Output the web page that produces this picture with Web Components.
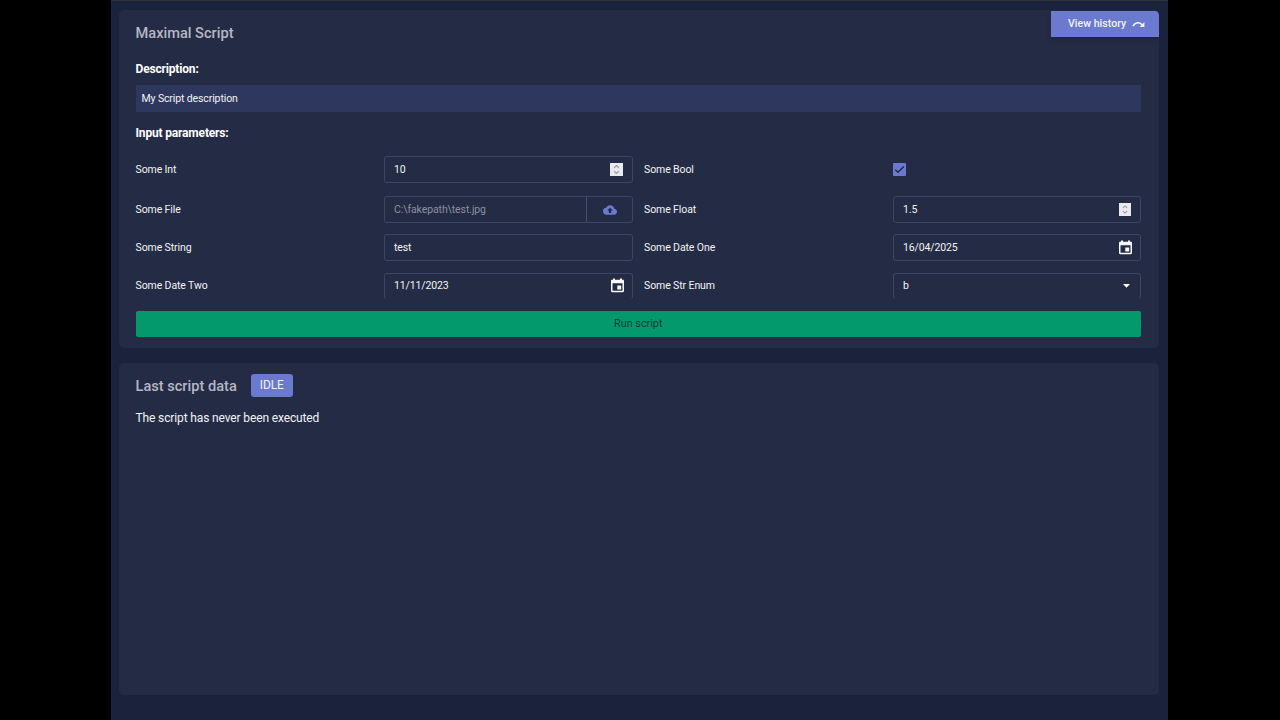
<!DOCTYPE html>
<html lang="en">
<head>
<meta charset="utf-8">
<title>Maximal Script</title>
<style>
html,body{margin:0;height:100%;background:#000;overflow:hidden}
body{font-family:Roboto,sans-serif;color:#f2f3f7;font-size:10.5px}
</style>
</head>
<body>
<script-page></script-page>
<script>
function define(name, html) {
  const template = document.createElement('template');
  template.innerHTML = html;
  customElements.define(name, class extends HTMLElement {
    constructor() {
      super();
      this.attachShadow({mode: 'open'}).append(template.content.cloneNode(true));
    }
  });
}

define('ui-card', `<style>
:host{display:block;box-sizing:border-box;background:#242b44;border-radius:5px;padding:0 18px 0 17px;overflow:hidden}
</style><slot></slot>`);

define('ui-title', `<style>
:host{display:block;font-size:14.6px;line-height:20px;font-weight:500;color:#b5b7c4;white-space:nowrap}
</style><slot></slot>`);

define('ui-label', `<style>
:host{display:block;line-height:27px;letter-spacing:-.1px;white-space:nowrap}
:host([short]){line-height:25px}
</style><slot></slot>`);

define('ui-heading', `<style>
:host{display:block;line-height:16px;font-size:12px;letter-spacing:-.17px;font-weight:700;color:#fff}
</style><slot></slot>`);

define('history-button', `<style>
:host{display:flex;box-sizing:border-box;width:108px;height:26px;padding-left:17px;align-items:center;background:#6b7ace;color:#f0f1fa;border-radius:0 4px 0 0;font-size:10.6px;line-height:12px;font-weight:500;box-shadow:0 2px 4px #151c3288;white-space:nowrap}
span{padding-bottom:1px}
svg{margin-left:6px;width:13px;height:9px}
</style><span><slot></slot></span><svg viewBox="0 0 13 9"><path d="M1 6.2C3 2.3 7.2 1.6 10.2 4.8" fill="none" stroke="#f7f7fd" stroke-width="1.5"/><path d="M12.4 2v5H7.6z" fill="#f7f7fd"/></svg>`);

define('ui-field', `<style>
:host{display:flex;box-sizing:border-box;height:27px;border:1px solid #3c4565;border-radius:3px;padding:0 7px 0 9px;align-items:center;justify-content:space-between;letter-spacing:-.13px;line-height:16px}
:host([open-bottom]){height:26px;border-bottom:0;padding-bottom:2px}
</style><span><slot></slot></span><slot name="icon"></slot>`);

define('file-field', `<style>
:host{display:flex;box-sizing:border-box;height:27px;border:1px solid #3c4565;border-radius:3px;line-height:16px}
.path{flex:1;padding-left:9px;display:flex;align-items:center;color:#8c90a2;letter-spacing:-.1px}
.up{width:45px;border-left:1px solid #465071;display:flex;align-items:center;justify-content:center}
svg{width:14px;height:14px;margin-left:1px}
</style><span class="path"><slot></slot></span><span class="up"><svg viewBox="0 0 24 24"><path fill="#6b7ace" d="M19.35 10.04A7.49 7.49 0 0 0 12 4C9.11 4 6.6 5.64 5.35 8.04A5.994 5.994 0 0 0 0 14c0 3.31 2.69 6 6 6h13c2.76 0 5-2.24 5-5 0-2.64-2.05-4.78-4.65-4.96zM14 13v4h-4v-4H7l5-5 5 5h-3z"/></svg></span>`);

define('number-spinner', `<style>
:host{display:block;width:13px;height:13px;background:#e9eaf0;margin-right:2px}
:host([narrow]){width:12px;margin-right:2px}
svg{display:block;width:100%;height:100%}
</style><svg viewBox="0 0 13 13"><path d="M4.2 4.8 6.5 2.6l2.3 2.2M4.2 8.2l2.3 2.2 2.3-2.2" fill="none" stroke="#9a9ca5" stroke-width="1.2"/></svg>`);

define('calendar-icon', `<style>
:host{display:block;width:15px;height:16px}
svg{display:block}
</style><svg width="15" height="16" viewBox="0 0.5 15 16"><path fill="#f8f8fa" fill-rule="evenodd" d="M3 1h2v1.3h5V1h2v1.3h.8c.7 0 1.2.5 1.2 1.2v10c0 .7-.5 1.2-1.2 1.2H2.200c-.7 0-1.200-.5-1.200-1.200v-10c0-.7.5-1.200 1.200-1.200H3zM2.500 5.800v7.400h10V5.800zM7.300 8h3.900v3.900H7.300z"/></svg>`);

define('caret-icon', `<style>
:host{display:block;width:7px;height:4px;margin-right:3px}
svg{display:block}
</style><svg width="7" height="4" viewBox="0 0 7 4"><path fill="#fff" d="M0 0h7L3.500 3.800z"/></svg>`);

define('check-box', `<style>
:host{display:block;width:13px;height:13px;background:#6b7ace;border-radius:1px;margin-top:7px}
svg{display:block}
</style><svg width="13" height="13" viewBox="0 0 13 13"><path d="M2.300 6.700 5 9.300l5.800-5.800" fill="none" stroke="#202844" stroke-width="1.400"/></svg>`);

define('status-badge', `<style>
:host{display:block;box-sizing:border-box;width:42px;height:23px;line-height:23px;text-align:center;border-radius:3px;background:#6b7ace;color:#eef0fb;font-size:12px;letter-spacing:-.1px}
</style><slot></slot>`);

define('run-button', `<style>
:host{display:block;height:26px;line-height:26px;text-align:center;background:#04996c;color:#0c3a36;border-radius:2px;font-size:10.8px}
</style><slot></slot>`);

define('script-page', `<style>
:host{display:flex;flex-direction:column;box-sizing:border-box;width:1057px;height:720px;margin-left:111px;padding:9px 9px 25px 7.500px;gap:15px;background:#1b223c;border-top:1px solid #303339}
.first{height:338px;flex:none;padding-top:13px;position:relative}
.second{flex:1;padding-top:11px}
history-button{position:absolute;top:1px;right:0}
.d{margin-top:18px}
.desc{box-sizing:border-box;height:27px;line-height:27px;background:#2e375d;padding-left:6px;margin:8px 0 13px;letter-spacing:-.12px}
.grid{display:grid;grid-template-columns:248.500px 248.500px 260.500px 248px;grid-template-rows:29px 27px 28px 26px;row-gap:11px;align-items:start;margin:15px 0 12px}
.grid>:nth-child(4n+3){padding-left:11.500px}
.head{display:flex;gap:14px;align-items:center;height:23px}
p{margin:13px 0 0;font-size:12px;letter-spacing:-.13px;line-height:16px}
</style>
<ui-card class="first">
<ui-title>Maximal Script</ui-title>
<history-button>View history</history-button>
<ui-heading class="d">Description:</ui-heading>
<div class="desc">My Script description</div>
<ui-heading>Input parameters:</ui-heading>
<div class="grid">
<ui-label>Some Int</ui-label><ui-field>10<number-spinner slot="icon"></number-spinner></ui-field>
<ui-label>Some Bool</ui-label><check-box></check-box>
<ui-label>Some File</ui-label><file-field>C:\\fakepath\\test.jpg</file-field>
<ui-label>Some Float</ui-label><ui-field>1.5<number-spinner slot="icon" narrow></number-spinner></ui-field>
<ui-label>Some String</ui-label><ui-field>test</ui-field>
<ui-label>Some Date One</ui-label><ui-field>16/04/2025<calendar-icon slot="icon"></calendar-icon></ui-field>
<ui-label short>Some Date Two</ui-label><ui-field open-bottom>11/11/2023<calendar-icon slot="icon"></calendar-icon></ui-field>
<ui-label short>Some Str Enum</ui-label><ui-field open-bottom>b<caret-icon slot="icon"></caret-icon></ui-field>
</div>
<run-button>Run script</run-button>
</ui-card>
<ui-card class="second">
<div class="head"><ui-title>Last script data</ui-title><status-badge>IDLE</status-badge></div>
<p>The script has never been executed</p>
</ui-card>`);
</script>
</body>
</html>
